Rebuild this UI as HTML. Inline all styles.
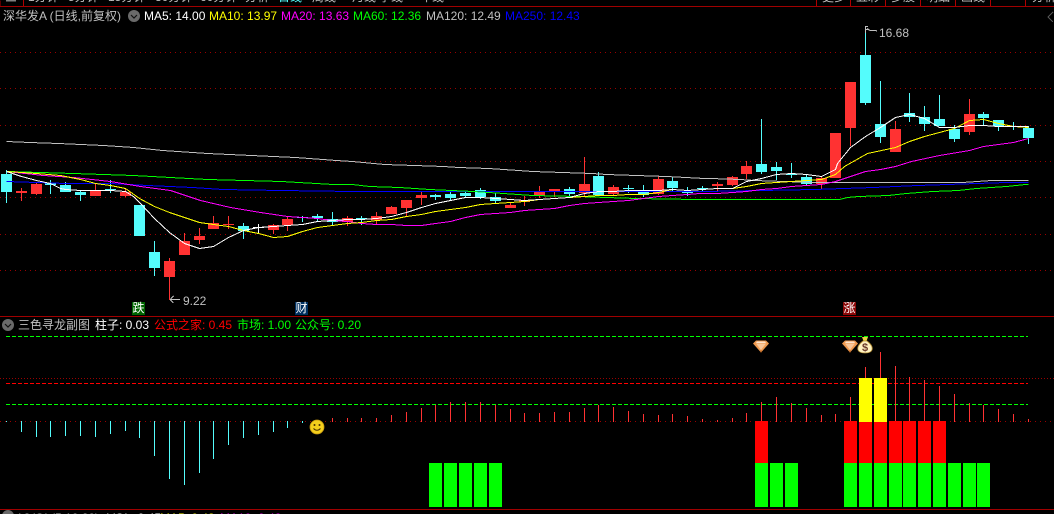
<!DOCTYPE html>
<html lang="zh">
<head>
<meta charset="utf-8">
<title>深华发A</title>
<style>
html,body{margin:0;padding:0;background:#000;}
#p{position:relative;width:1054px;height:514px;overflow:hidden;background:#000;font:12px/14px "Liberation Sans","WenQuanYi Zen Hei","Noto Sans CJK SC",sans-serif;color:#c0c0c0;}
#p svg{position:absolute;left:0;top:0;}
#p span{position:absolute;white-space:nowrap;}
.h{top:9px}
.s{top:318px}
.t{top:-10px}
.b{top:511px}
.lab{width:13px;height:13px;top:302px;line-height:13px;text-align:center;color:#fff;}
</style>
</head>
<body>
<div id="p">
<svg width="1054" height="514" viewBox="0 0 1054 514" shape-rendering="crispEdges" fill="none">
<!-- frame lines -->
<path d="M0 6.500H1054M0 316.500H1054M0 509.500H1054" stroke="#a00000"/>
<path d="M23.500 0V6M816.500 0V6M850.500 0V6M885.500 0V6M920.500 0V6M955.500 0V6M990.500 0V6M1025.500 0V6" stroke="#b00000"/>
<path d="M0 .5V6" stroke="#b00000"/>
<path d="M6 0h10v1.500h-10z" fill="#808080"/>
<!-- main grid -->
<path d="M0 52.500H1054M0 88.500H1054M0 125.500H1054M0 161.500H1054M0 197.500H1054M0 234.500H1054M0 270.500H1054" stroke="#990000" stroke-dasharray="1 4"/>
<!-- wicks -->
<path stroke="#ff3232" d="M21.500 188V201M36.500 183V195M95.500 184V196M125.500 188V197M169.500 258V300M184.500 233V255M199.500 228V244M213.500 216V229M228.500 216V229M273.500 224V234M287.500 217V231M347.500 216V226M376.500 212V224M391.500 206V214M406.500 200V216M421.500 192V205M510.500 202V208M524.500 196V206M539.500 186V198M554.500 189V197M584.500 157V196M613.500 185V195M658.500 176V195M717.500 182V191M732.500 176V186M746.500 161V179M821.500 176V189M850.500 82V146M895.500 121V152M969.500 99V135"/>
<path stroke="#54fcfc" d="M6.500 170V203M50.500 180V194M65.500 182V192M80.500 191V201M110.500 180V193M154.500 241V276M243.500 223V239M302.500 216V222M317.500 214V221M332.500 212V226M361.500 216V225M435.500 194V200M450.500 192V201M465.500 192V197M480.500 188V199M495.500 193V203M569.500 187V197M598.500 172V195M628.500 185V193M643.500 185V197M672.500 177V191M687.500 187V196M702.500 186V192M761.500 119V174M776.500 162V180M791.500 163V178M806.500 174V186M865.500 28V105M880.500 81V143M909.500 93V122M924.500 106V131M939.500 95V126M954.500 125V142M983.500 112V126M998.500 120V131M1013.500 122V130M1028.500 126V144"/>
<path stroke="#fff" d="M258.500 224V233"/>
<!-- bodies -->
<path fill="#ff3232" d="M16 191h11v2h-11zM31 184h11v10h-11zM90 190h11v6h-11zM120 192h11v4h-11zM164 261h11v16h-11zM179 241h11v14h-11zM194 236h11v4h-11zM208 223h11v6h-11zM223 224h11v1h-11zM268 225h11v5h-11zM282 219h11v6h-11zM342 218h11v4h-11zM371 216h11v4h-11zM386 207h11v7h-11zM401 200h11v8h-11zM416 195h11v3h-11zM505 205h11v3h-11zM519 200h11v2h-11zM534 192h11v4h-11zM549 189h11v2h-11zM579 184h11v9h-11zM608 187h11v7h-11zM653 179h11v15h-11zM712 184h11v2h-11zM727 177h11v8h-11zM741 166h11v8h-11zM816 178h11v6h-11zM830 133h11v45h-11zM845 82h11v46h-11zM890 129h11v23h-11zM964 114h11v18h-11z"/>
<path fill="#54fcfc" d="M1 174h11v18h-11zM45 183h11v2h-11zM60 185h11v7h-11zM75 192h11v3h-11zM105 189h11v1h-11zM134 205h11v31h-11zM149 252h11v16h-11zM238 226h11v5h-11zM297 217h11v1h-11zM312 216h11v2h-11zM327 219h11v3h-11zM356 218h11v1h-11zM430 195h11v2h-11zM445 194h11v4h-11zM460 193h11v3h-11zM475 190h11v7h-11zM490 197h11v4h-11zM564 189h11v5h-11zM593 176h11v19h-11zM623 188h11v1h-11zM638 192h11v3h-11zM667 181h11v7h-11zM682 191h11v2h-11zM697 188h11v1h-11zM756 164h11v8h-11zM771 167h11v4h-11zM786 174h11v1h-11zM801 177h11v7h-11zM860 55h11v48h-11zM875 124h11v13h-11zM904 113h11v4h-11zM919 117h11v7h-11zM934 119h11v7h-11zM949 129h11v10h-11zM978 114h11v4h-11zM993 120h11v6h-11zM1008 126h11v1h-11zM1023 128h11v10h-11z"/>
<path fill="#fff" d="M253 227h11v1h-11z"/>
<!-- MA lines -->
<g transform="translate(.5 .5)">
<polyline stroke="#c0c0c0" points="6,141 29,142 58,143 103,145 133,147 162,150 207,153 251,155 295,157 336,160 352,161 384,164 414,165 443,166 458,167 488,168 518,170 532,171 562,172 592,173 606,174 636,175 666,176 704,178 710,178 740,179 754,180 784,181 814,182 962,182 991,180 1028,180"/>
<polyline stroke="#0000ff" points="6,181 36,182 66,183 110,183 147,185 192,187 222,189 280,190 352,191 704,191 814,189 843,188 873,187 917,185 947,184 976,183 1006,182 1028,182"/>
<polyline stroke="#00ff00" points="6,171 73,173 133,175 207,179 281,181 333,184 352,184 369,186 399,187 429,189 473,191 503,193 532,195 577,196 606,197 636,198 695,199 839,199 847,197 858,196 888,195 906,193 932,191 958,190 976,188 1006,186 1025,184 1028,184"/>
<polyline stroke="#ff00ff" points="6,171 43,175 73,177 110,181 140,186 170,190 200,200 230,207 260,212 287,216 302,217 317,218 332,220 347,221 361,223 376,224 391,224 406,225 421,225 435,223 450,221 465,217 480,214 495,213 510,212 524,210 539,209 554,208 569,205 584,203 598,202 613,201 628,200 643,198 658,196 672,195 687,194 699,193 717,193 732,192 746,191 761,189 776,188 791,186 806,185 821,184 835,181 850,176 865,171 880,169 895,166 911,161 939,155 969,150 983,146 998,144 1013,142 1028,138"/>
<polyline stroke="#ffff00" points="6,171 36,173 60,175 80,179 95,183 110,185 125,188 139,198 154,206 169,212 184,217 199,222 213,224 228,226 243,230 258,233 273,237 287,236 302,231 317,227 332,225 347,223 361,222 376,220 391,219 406,216 421,214 435,211 450,209 465,207 480,204 495,203 510,202 524,201 539,199 554,198 569,197 584,196 598,195 613,195 628,194 643,194 658,192 672,189 687,190 717,188 732,188 746,186 761,183 776,182 791,181 806,180 821,179 835,174 844,166 867,153 895,147 909,141 924,136 939,132 954,128 969,120 983,119 998,123 1013,126 1028,127"/>
<polyline stroke="#fff" points="6,171 21,176 36,180 50,183 60,188 65,189 80,190 95,190 110,190 125,191 133,196 139,202 154,218 169,232 184,243 199,248 213,246 228,237 243,230 258,227 273,226 287,225 302,224 317,221 332,220 347,219 361,219 376,218 391,216 406,212 421,207 435,203 450,200 465,197 480,197 495,198 510,199 524,200 539,199 554,198 569,197 584,193 598,191 613,191 628,190 643,190 658,190 672,189 687,190 717,188 732,188 746,181 761,178 776,174 791,173 806,174 821,176 835,169 837,163 850,147 865,136 880,127 895,117 909,114 924,118 939,127 954,127 969,125 983,125 998,126 1013,126 1028,126"/>
</g>
<!-- price markers -->
<path stroke="#c0c0c0" d="M170 299.500H180M170.500 299L173.500 296M170.500 300L173.500 303"/>
<path stroke="#c0c0c0" d="M865.500 26V33M866 26.500H868M866 29.500H868M867 28.500L870 30.500H876L877 31.500"/>
<path stroke="#555" d="M1053 12L1048 17L1053 22"/>
<!-- sub chart grid -->
<path d="M0 378.500H1054" stroke="#990000" stroke-dasharray="1 2"/>
<path d="M0 421.500H1054" stroke="#990000" stroke-dasharray="1 4"/>
<path d="M6 336.500H1028M6 404.500H1028" stroke="#00ff00" stroke-dasharray="4 2"/>
<path d="M6 383.500H1028" stroke="#ff0000" stroke-dasharray="4 2"/>
<!-- cyan bars -->
<path stroke="#54fcfc" d="M6.500 421V422M21.500 421V432M36.500 421V437M50.500 421V437M65.500 421V436M80.500 421V436M95.500 421V437M110.500 421V434M125.500 421V431M139.500 421V438M154.500 421V456M169.500 421V479M184.500 421V485M199.500 421V473M213.500 421V459M228.500 421V445M243.500 421V438M258.500 421V435M273.500 421V432M287.500 421V428M302.500 421V423"/>
<!-- red bars -->
<path stroke="#ff3232" d="M332.500 418V422M347.500 418V422M361.500 418V422M376.500 418V422M391.500 415V422M406.500 412V422M421.500 408V422M435.500 405V422M450.500 402V422M465.500 402V422M480.500 402V422M495.500 405V422M510.500 409V422M524.500 413V422M539.500 413V422M554.500 412V422M569.500 412V422M584.500 408V422M598.500 405V422M613.500 407V422M628.500 411V422M643.500 414V422M658.500 415V422M672.500 414V422M687.500 416V422M702.500 419V422M717.500 420V422M732.500 418V422M746.500 413V422M761.500 402V422M776.500 397V422M791.500 403V422M806.500 408V422M821.500 415V422M835.500 414V422M850.500 397V422M865.500 367V422M880.500 352V422M895.500 366V422M909.500 377V422M924.500 380V422M939.500 386V422M954.500 394V422M969.500 403V422M983.500 405V422M998.500 409V422M1013.500 414V422M1028.500 419V422"/>
<!-- big bars -->
<path fill="#00ff00" d="M429 463h13v44h-13zM444 463h13v44h-13zM459 463h13v44h-13zM474 463h13v44h-13zM489 463h13v44h-13zM755 463h13v44h-13zM770 463h13v44h-13zM785 463h13v44h-13zM844 463h13v44h-13zM859 463h13v44h-13zM874 463h13v44h-13zM889 463h13v44h-13zM903 463h13v44h-13zM918 463h13v44h-13zM933 463h13v44h-13zM948 463h13v44h-13zM963 463h13v44h-13zM977 463h13v44h-13z"/>
<path fill="#ff0000" d="M755 421h13v42h-13zM844 421h13v42h-13zM859 422h13v41h-13zM874 422h13v41h-13zM889 421h13v42h-13zM903 421h13v42h-13zM918 421h13v42h-13zM933 421h13v42h-13z"/>
<path fill="#ffff00" d="M859 378h13v44h-13zM874 378h13v44h-13z"/>
<!-- label backgrounds -->
<rect x="132" y="302" width="13" height="13" fill="#006400"/>
<rect x="295" y="302" width="13" height="13" fill="#003060"/>
<rect x="843" y="302" width="13" height="13" fill="#8b0808"/>
<g shape-rendering="geometricPrecision">
<!-- header circles -->
<circle cx="134" cy="16" r="6" fill="#6a6a6a"/><path d="M131 15l3 3 3-3" stroke="#111" stroke-width="1.200"/>
<circle cx="8" cy="325" r="6" fill="#6a6a6a"/><path d="M5 324l3 3 3-3" stroke="#111" stroke-width="1.200"/>
<circle cx="8" cy="516" r="6" fill="#6a6a6a"/>
<!-- smiley -->
<circle cx="317" cy="427" r="7" fill="#f4cf1c" stroke="#c79a10" stroke-width=".8"/>
<circle cx="314.500" cy="425" r="1" fill="#4a3000"/><circle cx="319.500" cy="425" r="1" fill="#4a3000"/>
<path d="M313.500 428.500q3.500 3.500 7 0" stroke="#4a3000" stroke-width="1"/>
<!-- gems -->
<path d="M753 343.500L756 340.500H766L769 343.500L761 352.500Z" fill="#ef9a4f"/>
<path d="M756 343.500H766L761 350Z" fill="#f7c79a"/>
<path d="M757 341.500H765L766 343H756Z" fill="#fbe3cc"/>
<path d="M761 350V352.500" stroke="#c96a20"/>
<path d="M842 343.500L845 340.500H855L858 343.500L850 352.500Z" fill="#ef9a4f"/>
<path d="M845 343.500H855L850 350Z" fill="#f7c79a"/>
<path d="M846 341.500H854L855 343H845Z" fill="#fbe3cc"/>
<path d="M850 350V352.500" stroke="#c96a20"/>
<!-- money bag -->
<path d="M862 337H868L866.500 341H863.500Z" fill="#e8d040"/>
<path d="M863 341H867C871 344 873 347 872 350C871 352.500 868 353 865 353C862 353 859 352.500 858 350C857 347 859 344 863 341Z" fill="#fff3c0" stroke="#b08a30" stroke-width=".8"/>
<text x="865" y="351" font-family="Liberation Sans,sans-serif" font-size="11" font-weight="bold" fill="#6a3a2a" text-anchor="middle">$</text>
</g>
</svg>

<!-- top clipped tabs -->
<span class="t" style="left:28px">1分钟</span>
<span class="t" style="left:68px">5分钟</span>
<span class="t" style="left:108px">15分钟</span>
<span class="t" style="left:155px">30分钟</span>
<span class="t" style="left:200px">60分钟</span>
<span class="t" style="left:245px">分析</span>
<span class="t" style="left:278px;color:#54fcfc">日线</span>
<span class="t" style="left:312px">周线</span>
<span class="t" style="left:352px">月线</span>
<span class="t" style="left:379px">季线</span>
<span class="t" style="left:420px">年线</span>
<span class="t" style="left:822px">更多</span>
<span class="t" style="left:856px">五彩</span>
<span class="t" style="left:891px">多股</span>
<span class="t" style="left:926px">明细</span>
<span class="t" style="left:961px">画线</span>
<span class="t" style="left:1032px">分析</span>

<!-- main header -->
<span class="h" style="left:3px">深华发A (日线,前复权)</span>
<span class="h" style="left:144px;color:#fff">MA5: 14.00</span>
<span class="h" style="left:209px;color:#ff0">MA10: 13.97</span>
<span class="h" style="left:281px;color:#f0f">MA20: 13.63</span>
<span class="h" style="left:353px;color:#0f0">MA60: 12.36</span>
<span class="h" style="left:426px;color:#c0c0c0">MA120: 12.49</span>
<span class="h" style="left:505px;color:#00f">MA250: 12.43</span>

<span style="left:879px;top:26px">16.68</span>
<span style="left:183px;top:294px">9.22</span>

<span class="lab" style="left:132px">跌</span>
<span class="lab" style="left:295px">财</span>
<span class="lab" style="left:843px">涨</span>

<!-- sub header -->
<span class="s" style="left:18px">三色寻龙副图</span>
<span class="s" style="left:95px;color:#fff">柱子: 0.03</span>
<span class="s" style="left:154px;color:#f00">公式之家: 0.45</span>
<span class="s" style="left:237px;color:#0f0">市场: 1.00</span>
<span class="s" style="left:295px;color:#0f0">公众号: 0.20</span>

<!-- bottom clipped legend -->
<span class="b" style="left:19px">VVOL(5,10,20)</span>
<span class="b" style="left:107px;color:#fff">VOL: 0.45</span>
<span class="b" style="left:160px;color:#ff0">MA5: 0.43</span>
<span class="b" style="left:220px;color:#f0f">MA10: 0.43</span>
</div>
</body>
</html>
